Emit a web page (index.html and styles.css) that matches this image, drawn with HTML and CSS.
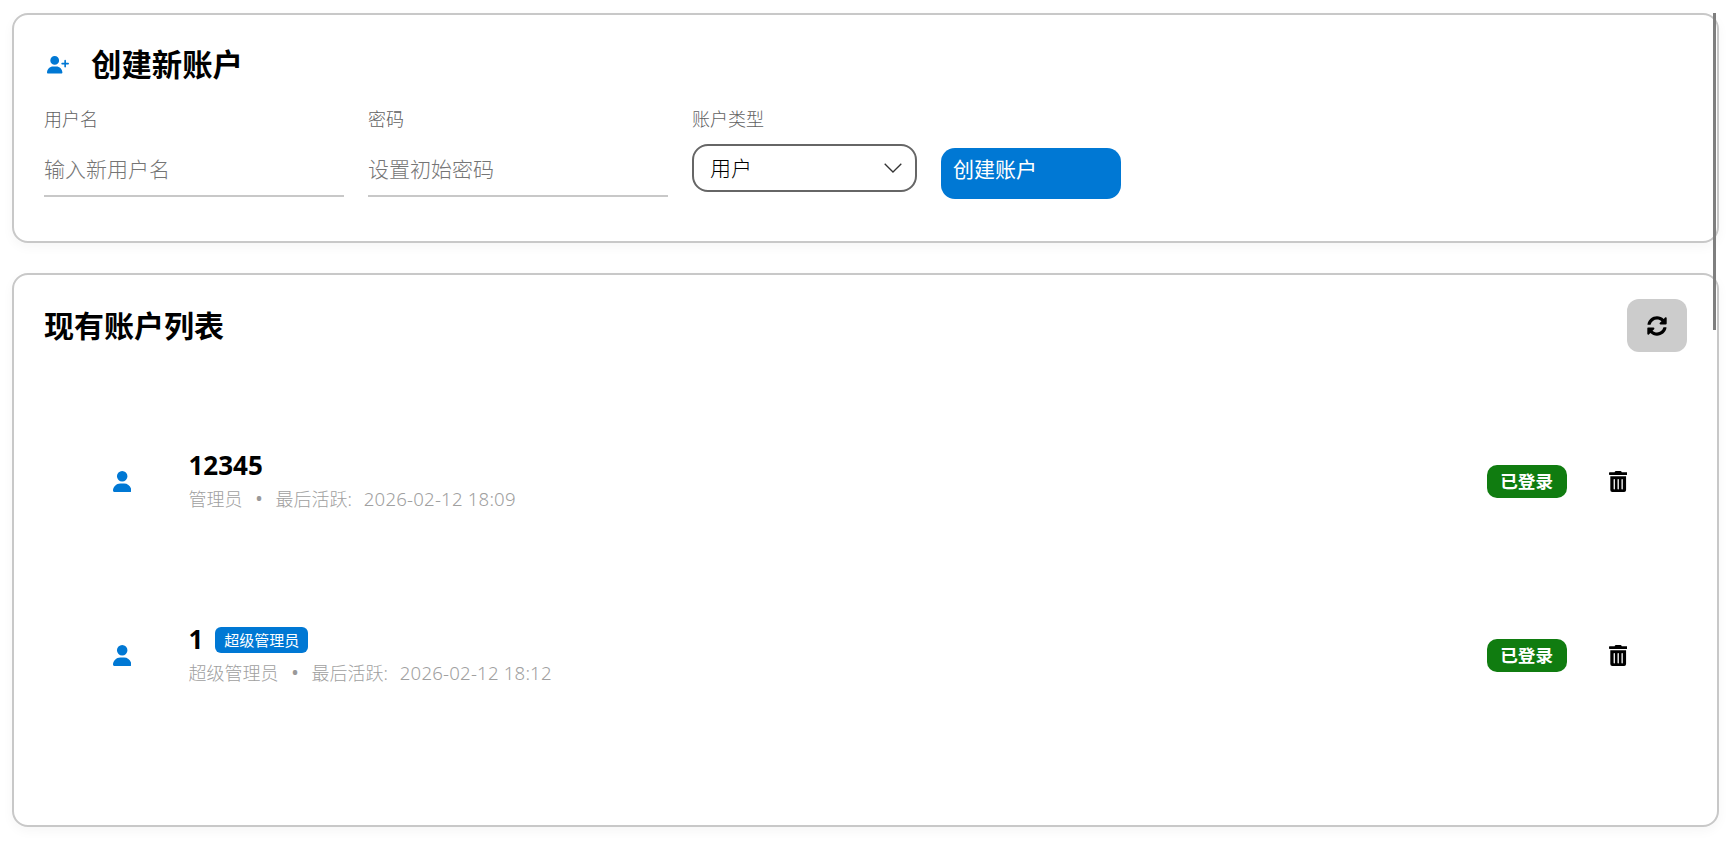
FILE: index.html
```html
<!DOCTYPE html>
<html lang="zh-CN">
<head>
<meta charset="utf-8">
<title>账户管理</title>
<link rel="stylesheet" href="styles.css">
</head>
<body>
<main class="page">
  <section class="card card-create">
    <h2 class="title title-create">
      <svg class="icon-add" viewBox="0 0 640 512"><path d="M96 128a128 128 0 1 1 256 0A128 128 0 1 1 96 128zM0 482.3C0 383.8 79.8 304 178.3 304h91.4C368.2 304 448 383.8 448 482.3c0 16.4-13.3 29.7-29.7 29.7H29.7C13.3 512 0 498.7 0 482.3zM504 312V248H440c-13.3 0-24-10.7-24-24s10.7-24 24-24h64V136c0-13.3 10.7-24 24-24s24 10.7 24 24v64h64c13.3 0 24 10.7 24 24s-10.7 24-24 24H552v64c0 13.3-10.7 24-24 24s-24-10.7-24-24z"/></svg>
      <span>创建新账户</span>
    </h2>
    <form class="form">
      <div class="field">
        <label class="label">用户名</label>
        <input class="input" type="text" placeholder="输入新用户名">
      </div>
      <div class="field">
        <label class="label">密码</label>
        <input class="input" type="password" placeholder="设置初始密码">
      </div>
      <div class="field field-select">
        <label class="label">账户类型</label>
        <div class="select-wrap">
          <select class="select"><option>用户</option><option>管理员</option></select>
          <svg class="chevron" viewBox="0 0 18 10"><path d="M0.7 0.7 L9 9 L17.3 0.7"/></svg>
        </div>
      </div>
      <button class="submit" type="button">创建账户</button>
    </form>
  </section>

  <section class="card card-list">
    <header class="list-head">
      <h2 class="title title-list">现有账户列表</h2>
      <button class="refresh" type="button" aria-label="刷新">
        <svg class="icon-refresh" viewBox="0 0 512 512"><path d="M370.72 133.28C339.458 104.008 298.888 87.962 255.848 88c-77.458.068-144.328 53.178-162.791 126.85-1.344 5.363-6.122 9.15-11.651 9.15H24.103c-7.498 0-13.194-6.807-11.807-14.176C33.933 94.924 134.813 8 256 8c66.448 0 126.791 26.136 171.315 68.685L463.03 40.97C478.149 25.851 504 36.559 504 57.941V192c0 13.255-10.745 24-24 24H345.941c-21.382 0-32.09-25.851-16.971-40.971l41.75-41.749zM32 296h134.059c21.382 0 32.09 25.851 16.971 40.971l-41.75 41.75c31.262 29.273 71.835 45.319 114.876 45.28 77.418-.07 144.315-53.144 162.787-126.849 1.344-5.363 6.122-9.15 11.651-9.15h57.304c7.498 0 13.194 6.807 11.807 14.176C478.067 417.076 377.187 504 256 504c-66.448 0-126.791-26.136-171.315-68.685L48.97 471.03C33.851 486.149 8 475.441 8 454.059V320c0-13.255 10.745-24 24-24z"/></svg>
      </button>
    </header>
    <ul class="list">
      <li class="row">
        <svg class="icon-user" viewBox="0 0 448 512"><path d="M224 256A128 128 0 1 0 224 0a128 128 0 1 0 0 256zm-45.7 48C79.8 304 0 383.8 0 482.3C0 498.7 13.3 512 29.7 512H418.3c16.4 0 29.7-13.3 29.7-29.7C448 383.8 368.2 304 269.7 304H178.3z"/></svg>
        <div class="info">
          <div class="name"><span>12345</span></div>
          <div class="meta"><span>管理员</span><span class="dot">•</span><span class="active">最后活跃:</span><span class="date">2026-02-12 18:09</span></div>
        </div>
        <span class="status">已登录</span>
        <button class="delete" type="button" aria-label="删除">
          <svg class="icon-trash" viewBox="0 0 448 512"><path d="M32 464a48 48 0 0 0 48 48h288a48 48 0 0 0 48-48V128H32zm272-256a16 16 0 0 1 32 0v224a16 16 0 0 1-32 0zm-96 0a16 16 0 0 1 32 0v224a16 16 0 0 1-32 0zm-96 0a16 16 0 0 1 32 0v224a16 16 0 0 1-32 0zM432 32H312l-9.4-18.7A24 24 0 0 0 281.1 0H166.8a23.72 23.72 0 0 0-21.4 13.3L136 32H16A16 16 0 0 0 0 48v32a16 16 0 0 0 16 16h416a16 16 0 0 0 16-16V48a16 16 0 0 0-16-16z"/></svg>
        </button>
      </li>
      <li class="row">
        <svg class="icon-user" viewBox="0 0 448 512"><path d="M224 256A128 128 0 1 0 224 0a128 128 0 1 0 0 256zm-45.7 48C79.8 304 0 383.8 0 482.3C0 498.7 13.3 512 29.7 512H418.3c16.4 0 29.7-13.3 29.7-29.7C448 383.8 368.2 304 269.7 304H178.3z"/></svg>
        <div class="info">
          <div class="name"><span>1</span><span class="tag">超级管理员</span></div>
          <div class="meta"><span>超级管理员</span><span class="dot">•</span><span class="active">最后活跃:</span><span class="date">2026-02-12 18:12</span></div>
        </div>
        <span class="status">已登录</span>
        <button class="delete" type="button" aria-label="删除">
          <svg class="icon-trash" viewBox="0 0 448 512"><path d="M32 464a48 48 0 0 0 48 48h288a48 48 0 0 0 48-48V128H32zm272-256a16 16 0 0 1 32 0v224a16 16 0 0 1-32 0zm-96 0a16 16 0 0 1 32 0v224a16 16 0 0 1-32 0zm-96 0a16 16 0 0 1 32 0v224a16 16 0 0 1-32 0zM432 32H312l-9.4-18.7A24 24 0 0 0 281.1 0H166.8a23.72 23.72 0 0 0-21.4 13.3L136 32H16A16 16 0 0 0 0 48v32a16 16 0 0 0 16 16h416a16 16 0 0 0 16-16V48a16 16 0 0 0-16-16z"/></svg>
        </button>
      </li>
    </ul>
  </section>
  <div class="scroll-thumb"></div>
</main>
</body>
</html>
```
FILE: styles.css
```css
* { box-sizing: border-box; }
html, body { margin: 0; height: 100%; overflow: hidden; }
body {
  background: #fff;
  color: #000;
  font-family: "Noto Sans", "Noto Sans CJK SC", sans-serif;
}
.page {
  position: relative;
  height: 846px;
  padding: 13px 12px 19px;
  display: flex;
  flex-direction: column;
  gap: 30px;
}
.card {
  background: #fff;
  border: 2px solid #c8c8c8;
  border-radius: 16px;
  padding: 24px 30px;
  box-shadow: 0 4px 12px rgba(0, 0, 0, 0.04);
}
.card-create { height: 230px; }
.card-list { flex: 1; }
.title {
  margin: 0;
  font-size: 30.4px;
  line-height: 52px;
  font-weight: 700;
}
.title-list { font-size: 30px; }
.title-create { display: flex; align-items: center; gap: 22px; padding-left: 3px; }
.icon-add { width: 22px; height: 17.6px; fill: #0078d4; flex: none; }
.form { display: flex; align-items: flex-start; gap: 24px; margin-top: 15px; }
.field { display: flex; flex-direction: column; width: 300px; }
.field-select { width: 225px; }
.label { font-size: 18px; line-height: 27px; margin-bottom: 11px; color: #616161; font-weight: 300; }
.input {
  height: 53px;
  padding: 0 0 2px;
  border: 0;
  border-bottom: 2px solid #c8c8c8;
  outline: 0;
  background: transparent;
  font: inherit;
  font-size: 21px;
  font-weight: 300;
}
.input::placeholder { color: #757575; opacity: 1; }
.select-wrap { position: relative; }
.select {
  display: block;
  width: 100%;
  height: 48px;
  padding: 0 16px;
  border: 2px solid #666;
  border-radius: 16px;
  background: #fff;
  color: #000;
  font: inherit;
  font-size: 21px;
  font-weight: 300;
  appearance: none;
  outline: 0;
}
.chevron {
  position: absolute;
  top: 19px;
  right: 15px;
  width: 18px;
  height: 10px;
  fill: none;
  stroke: #333;
  stroke-width: 1.3;
}
.submit {
  width: 180px;
  height: 51px;
  margin-top: 42px;
  padding: 0 12px 12px;
  border: 0;
  border-radius: 14px;
  background: #0078d4;
  color: #fff;
  font: inherit;
  font-size: 21px;
  font-weight: 400;
  text-align: left;
}
.list-head { display: flex; justify-content: space-between; align-items: center; height: 53px; }
.refresh {
  display: flex;
  align-items: center;
  justify-content: center;
  width: 60px;
  height: 53px;
  padding: 0;
  border: 0;
  border-radius: 12px;
  background: #ccc;
}
.icon-refresh { width: 20px; height: 20px; fill: #000; }
.list { list-style: none; margin: 42px 0 0; padding: 0; }
.row {
  display: flex;
  align-items: center;
  height: 174px;
  padding: 0 60px 0 69px;
}
.icon-user { width: 18.4px; height: 21px; fill: #0078d4; flex: none; }
.info { flex: 1; margin-left: 57px; }
.name {
  display: flex;
  align-items: center;
  gap: 12px;
  font-size: 26px;
  line-height: 30px;
  font-weight: 700;
}
.tag {
  margin-top: 2px;
  padding: 0 9px;
  border-radius: 6px;
  background: #0078d4;
  color: #fff;
  font-size: 15px;
  line-height: 26px;
  font-weight: 400;
}
.meta {
  display: flex;
  font-size: 18px;
  line-height: 26px;
  margin-top: 6px;
  color: #a0a0a0;
  font-weight: 300;
}
.dot { width: 33px; text-align: center; font-size: 20px; font-weight: 400; color: #999; }
.active { margin-right: 12px; }
.date { font-size: 18.6px; letter-spacing: 0.2px; }
.status {
  width: 80px;
  height: 33px;
  border-radius: 10px;
  background: #107c10;
  color: #fff;
  font-size: 17.6px;
  line-height: 33px;
  font-weight: 700;
  text-align: center;
}
.delete {
  display: flex;
  margin-left: 42px;
  padding: 0;
  border: 0;
  background: transparent;
}
.icon-trash { width: 18.4px; height: 21px; fill: #000; }
.scroll-thumb {
  position: absolute;
  top: 13px;
  left: 1713px;
  width: 3px;
  height: 317px;
  background: #7f7f7f;
}
```
